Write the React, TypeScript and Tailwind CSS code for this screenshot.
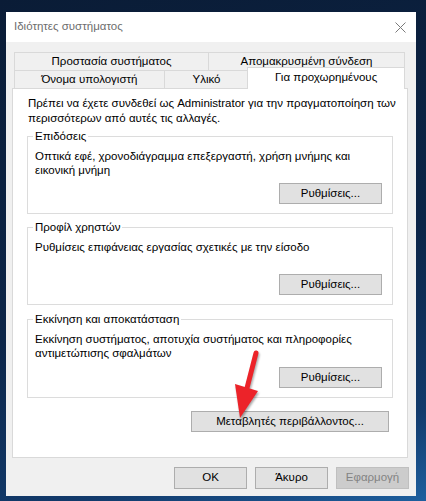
import React from 'react';

const font = { fontFamily: '"Liberation Sans", Arial, sans-serif' };

const WinButton: React.FC<{ label: string; className?: string; disabled?: boolean }> = ({ label, className = '', disabled }) => (
  <button
    className={
      'h-[21px] border text-[11.5px] leading-none flex items-center justify-center ' +
      (disabled ? 'bg-[#cccccc] border-[#bfbfbf] text-[#838383] ' : 'bg-[#e1e1e1] border-[#adadad] text-black ') +
      className
    }
  >
    {label}
  </button>
);

const Group: React.FC<{ title: string; text: React.ReactNode; className?: string }> = ({ title, text, className = '' }) => (
  <div className={'relative mx-[14px] border border-[#dcdcdc] flex flex-col ' + className}>
    <span className="absolute -top-[8px] left-[5px] bg-white px-[2px] leading-[14px]">{title}</span>
    <p className="pl-[7px] pt-[12px] leading-[14px] whitespace-nowrap">{text}</p>
    <div className="mt-auto mb-[9px] mr-[10px] flex justify-end">
      <WinButton label="Ρυθμίσεις..." className="w-[103px]" />
    </div>
  </div>
);

const App: React.FC = () => {
  return (
    <div
      className="relative w-[426px] h-[501px] overflow-hidden bg-[linear-gradient(165deg,#0a1c36_0%,#0c2548_55%,#123a6b_85%,#1e5f9e_100%)] pt-[12px] pl-[6px] text-[11.5px]"
      style={font}
    >
      {/* Dialog */}
      <div className="w-[410px] h-[484px] bg-[#f0f0f0] flex flex-col text-black">
        {/* Title bar */}
        <div className="h-[30px] bg-white flex items-center justify-between pl-[8px] pr-[10px]">
          <span className="text-[#6d6d6d]">Ιδιότητες συστήματος</span>
          <svg width="11" height="11" viewBox="0 0 11 11">
            <path d="M0.5 0.5 L10.5 10.5 M10.5 0.5 L0.5 10.5" stroke="#7a7a7a" strokeWidth="1" />
          </svg>
        </div>

        {/* Tabs */}
        <div className="mt-[10px] ml-[8px]">
          <div className="flex h-[18px]">
            <div className="w-[194px] border-t border-l border-[#d9d9d9] flex items-center justify-center">Προστασία συστήματος</div>
            <div className="w-[197px] border-t border-l border-r border-[#d9d9d9] flex items-center justify-center">Απομακρυσμένη σύνδεση</div>
          </div>
          <div className="flex h-[18px] border-t border-[#d9d9d9] w-[391px]">
            <div className="w-[151px] border-l border-[#d9d9d9] flex items-center justify-center">Όνομα υπολογιστή</div>
            <div className="w-[85px] border-l border-[#d9d9d9] flex items-center justify-center">Υλικό</div>
            <div className="relative z-10 -mt-[4px] -ml-[1px] w-[159px] h-[22px] bg-white border-t border-l border-r border-[#d9d9d9] flex items-center justify-center pb-[1px]">
              Για προχωρημένους
            </div>
          </div>
        </div>

        {/* Panel */}
        <div className="ml-[6px] w-[396px] h-[370px] bg-white border border-[#d9d9d9] flex flex-col">
          <p className="pl-[15px] pt-[7px] leading-[15px] whitespace-nowrap">
            Πρέπει να έχετε συνδεθεί ως Administrator για την πραγματοποίηση των
            <br />
            περισσότερων από αυτές τις αλλαγές.
          </p>
          <Group
            title="Επιδόσεις"
            className="mt-[10px] h-[78px]"
            text={<>Οπτικά εφέ, χρονοδιάγραμμα επεξεργαστή, χρήση μνήμης και<br />εικονική μνήμη</>}
          />
          <Group
            title="Προφίλ χρηστών"
            className="mt-[13px] h-[78px]"
            text="Ρυθμίσεις επιφάνειας εργασίας σχετικές με την είσοδο"
          />
          <Group
            title="Εκκίνηση και αποκατάσταση"
            className="mt-[14px] h-[79px]"
            text={<>Εκκίνηση συστήματος, αποτυχία συστήματος και πληροφορίες<br />αντιμετώπισης σφαλμάτων</>}
          />
          <div className="mt-[13px] mr-[18px] flex justify-end">
            <WinButton label="Μεταβλητές περιβάλλοντος..." className="w-[198px] h-[20px]" />
          </div>
        </div>

        {/* Footer buttons */}
        <div className="mt-[9px] mr-[7px] flex justify-end gap-[8px]">
          <WinButton label="OK" className="w-[73px] h-[22px]" />
          <WinButton label="Άκυρο" className="w-[73px] h-[22px]" />
          <WinButton label="Εφαρμογή" className="w-[73px] h-[22px]" disabled />
        </div>
      </div>

      {/* Red annotation arrow */}
      <svg
        className="absolute left-0 top-0 pointer-events-none drop-shadow-[1px_2px_1px_rgba(0,0,0,0.35)]"
        width="426"
        height="501"
        viewBox="0 0 426 501"
      >
        <path d="M256 353 L247 388" stroke="#ec2329" strokeWidth="5" strokeLinecap="round" />
        <polygon points="235,384 258,391 240,418" fill="#ec2329" />
      </svg>
    </div>
  );
};

export default App;
